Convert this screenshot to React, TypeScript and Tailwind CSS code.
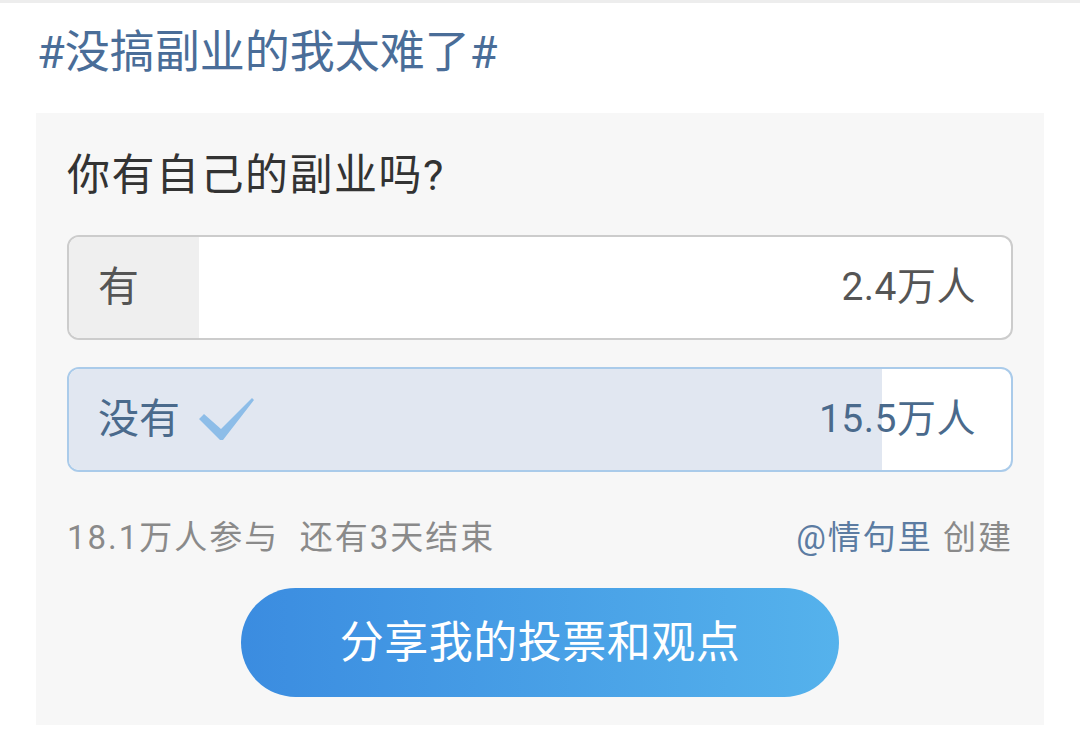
import React from "react";

const font = { fontFamily: 'Roboto, "Noto Sans CJK SC", "Noto Sans", sans-serif' };

function Check() {
  return (
    <svg width="56" height="46" viewBox="0 0 56 46" className="ml-[18px]">
      <polygon points="1,22 6,17 23,32 54,1 56,3 25,43 22,43" fill="#8dbde8" />
    </svg>
  );
}

export default function App() {
  return (
    <div className="w-[1080px] h-[731px] bg-white overflow-hidden" style={font}>
      <div className="h-[3px] bg-[#ededed]" />
      <div className="h-[98px] flex items-center pl-[37px]">
        <span className="text-[45px] leading-none text-[#4a6d98]">#没搞副业的我太难了#</span>
      </div>
      <div className="mt-[12px] ml-[36px] w-[1008px] h-[612px] bg-[#f7f7f7] px-[31px] pt-[40px] flex flex-col">
        <div className="text-[43px] leading-[44px] text-[#333333] tracking-[1.5px]">你有自己的副业吗?</div>

        <div className="mt-[38px] h-[105px] rounded-[12px] border-2 border-[#cccccc] bg-white overflow-hidden flex relative">
          <div className="w-[130px] bg-[#efefef]" />
          <div className="absolute inset-0 flex items-center justify-between pl-[29px] pr-[35px]">
            <span className="text-[41px] text-[#555555]">有</span>
            <span className="text-[39px] text-[#555555] tracking-[0.5px]">2.4万人</span>
          </div>
        </div>

        <div className="mt-[27px] h-[105px] rounded-[12px] border-2 border-[#aacbea] bg-white overflow-hidden flex relative">
          <div className="w-[813px] bg-[#e1e7f1]" />
          <div className="absolute inset-0 flex items-center justify-between pl-[29px] pr-[35px]">
            <span className="flex items-center">
              <span className="text-[41px] text-[#4a6a8c]">没有</span>
              <Check />
            </span>
            <span className="text-[39px] text-[#4a6a8c] tracking-[0.5px]">15.5万人</span>
          </div>
        </div>

        <div className="mt-[46px] h-[40px] flex items-center justify-between text-[33px] text-[#8a8a8a] tracking-[2px]">
          <span>18.1万人参与&nbsp;&nbsp;还有3天结束</span>
          <span>
            <span className="text-[#5c7ca2]">@情句里</span> 创建
          </span>
        </div>

        <div className="mt-[30px] mx-auto w-[598px] h-[109px] rounded-full bg-gradient-to-r from-[#3b8ce0] to-[#55b2ec] flex items-center justify-center">
          <span className="text-[44px] text-white tracking-[0.5px]">分享我的投票和观点</span>
        </div>
      </div>
    </div>
  );
}
